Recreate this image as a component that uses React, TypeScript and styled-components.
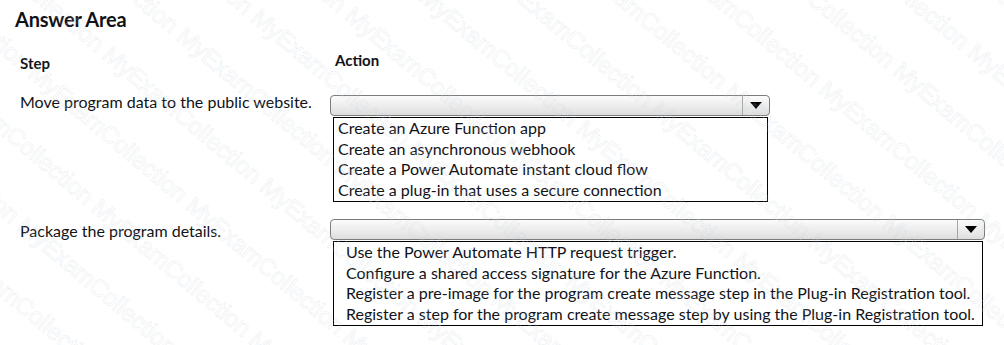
import React from "react";
import styled, { createGlobalStyle } from "styled-components";

const GlobalStyle = createGlobalStyle`
  html, body {
    margin: 0;
    padding: 0;
    background: #ffffff;
  }
  body {
    font-family: Lato, "Liberation Sans", sans-serif;
    color: #111318;
  }
`;

const Page = styled.div`
  position: relative;
  width: 1004px;
  height: 345px;
  overflow: hidden;
  background: #ffffff;
`;

const Content = styled.div`
  position: relative;
  z-index: 1;
  padding: 7px 0 0 20px;
`;

const Title = styled.h1`
  margin: 0 0 0 -5px;
  font-size: 20px;
  font-weight: 700;
  line-height: 24px;
  letter-spacing: -0.2px;
`;

const Grid = styled.div`
  display: grid;
  grid-template-columns: 310px auto;
  align-items: start;
`;

const HeaderCell = styled.div<{ $top: number; $indent?: number }>`
  font-size: 15px;
  font-weight: 700;
  line-height: 18px;
  margin-top: ${({ $top }) => $top}px;
  margin-left: ${({ $indent }) => $indent ?? 0}px;
`;

const StepLabel = styled.div<{ $top: number }>`
  font-size: 16px;
  line-height: 20px;
  margin-top: ${({ $top }) => $top}px;
`;

const ActionCell = styled.div<{ $top: number }>`
  margin-top: ${({ $top }) => $top}px;
  display: flex;
  flex-direction: column;
`;

const SelectBox = styled.div<{ $width: number }>`
  width: ${({ $width }) => $width}px;
  height: 21px;
  box-sizing: border-box;
  border: 1px solid #7c7c7c;
  border-radius: 4px;
  background: linear-gradient(#fbfbfb, #ececec 55%, #dedede);
  display: flex;
  justify-content: flex-end;
`;

const ArrowButton = styled.div`
  width: 26px;
  border-left: 1px solid #a6a6a6;
  display: flex;
  align-items: center;
  justify-content: center;
`;

const Triangle = styled.div`
  width: 0;
  height: 0;
  border-left: 6px solid transparent;
  border-right: 6px solid transparent;
  border-top: 7px solid #000;
`;

const OptionList = styled.div<{ $width: number; $pad: number }>`
  margin-left: 3px;
  margin-top: 1px;
  width: ${({ $width }) => $width}px;
  box-sizing: border-box;
  border: 1px solid #000;
  background: #fff;
  padding: 0 0 1px ${({ $pad }) => $pad}px;
`;

const Option = styled.div`
  font-size: 16px;
  line-height: 20.5px;
  white-space: nowrap;
`;

const Watermark = styled.div`
  position: absolute;
  inset: -300px -200px;
  z-index: 2;
  pointer-events: none;
  transform: rotate(40deg);
  display: flex;
  flex-direction: column;
  gap: 34px;
  opacity: 0.4;
`;

const WatermarkLine = styled.div<{ $shift: number }>`
  white-space: nowrap;
  font-family: "Liberation Sans", sans-serif;
  font-size: 24px;
  color: transparent;
  -webkit-text-stroke: 0.5px #c9d4dc;
  margin-left: ${({ $shift }) => $shift}px;
`;

const firstOptions = [
  "Create an Azure Function app",
  "Create an asynchronous webhook",
  "Create a Power Automate instant cloud flow",
  "Create a plug-in that uses a secure connection",
];

const secondOptions = [
  "Use the Power Automate HTTP request trigger.",
  "Configure a shared access signature for the Azure Function.",
  "Register a pre-image for the program create message step in the Plug-in Registration tool.",
  "Register a step for the program create message step by using the Plug-in Registration tool.",
];

const Dropdown = ({
  width,
  listWidth,
  pad,
  options,
}: {
  width: number;
  listWidth: number;
  pad: number;
  options: string[];
}) => (
  <>
    <SelectBox $width={width}>
      <ArrowButton>
        <Triangle />
      </ArrowButton>
    </SelectBox>
    <OptionList $width={listWidth} $pad={pad}>
      {options.map((o) => (
        <Option key={o}>{o}</Option>
      ))}
    </OptionList>
  </>
);

const App = () => {
  const lines = Array.from({ length: 30 }, (_, i) => i);
  return (
    <Page>
      <GlobalStyle />
      <Content>
        <Title>Answer Area</Title>
        <Grid>
          <HeaderCell $top={23}>Step</HeaderCell>
          <HeaderCell $top={20} $indent={5}>
            Action
          </HeaderCell>
          <StepLabel $top={20}>Move program data to the public website.</StepLabel>
          <ActionCell $top={23}>
            <Dropdown width={440} listWidth={435} pad={4} options={firstOptions} />
          </ActionCell>
          <StepLabel $top={19}>Package the program details.</StepLabel>
          <ActionCell $top={17}>
            <Dropdown width={655} listWidth={650} pad={12} options={secondOptions} />
          </ActionCell>
        </Grid>
      </Content>
      <Watermark>
        {lines.map((i) => (
          <WatermarkLine key={i} $shift={(i % 4) * -45}>
            {"MyExamCollection ".repeat(14)}
          </WatermarkLine>
        ))}
      </Watermark>
    </Page>
  );
};

export default App;
